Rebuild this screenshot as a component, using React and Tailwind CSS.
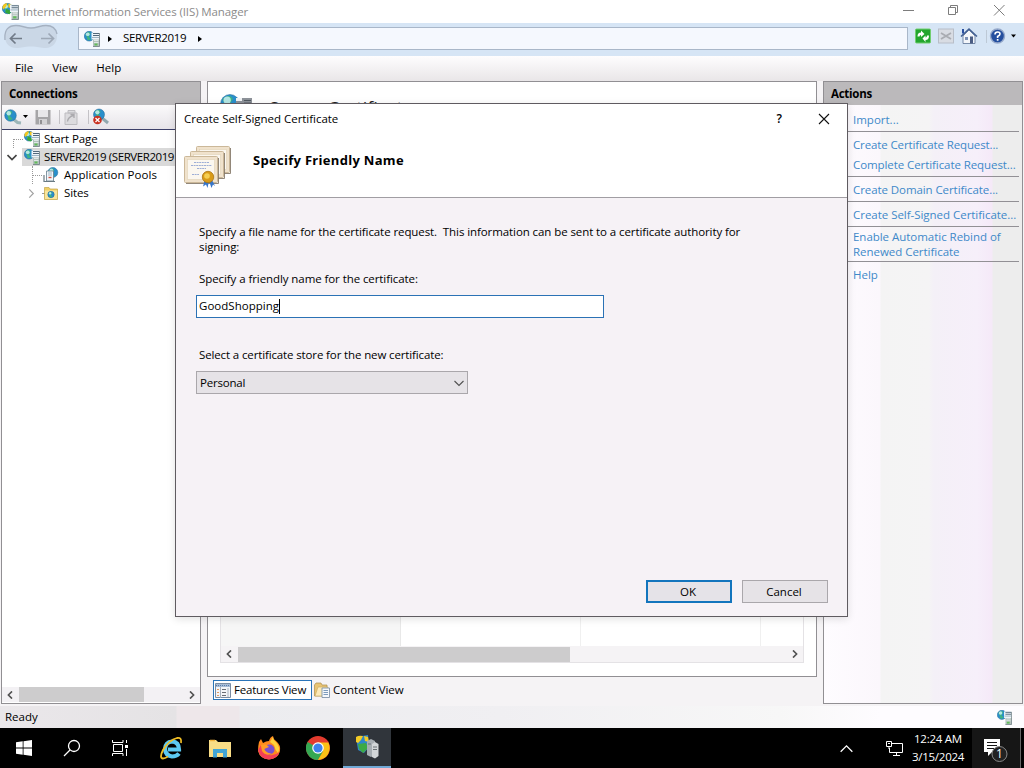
import React from "react";

const Globe = ({ r = 5, cx = 6, cy = 6 }) => (
  <g>
    <circle cx={cx} cy={cy} r={r} fill="#2a8fcb" />
    <path
      d={`M${cx - r * 0.8} ${cy - r * 0.5}Q${cx} ${cy - r * 1.2} ${cx + r * 0.3} ${cy - r * 0.5}L${cx - r * 0.1} ${cy + r * 0.1}L${cx + r * 0.4} ${cy + r * 0.6}L${cx - r * 0.3} ${cy + r * 0.9}L${cx - r * 0.5} ${cy + r * 0.1}Z`}
      fill="#3fb383"
    />
    <circle cx={cx - r * 0.3} cy={cy - r * 0.4} r={r * 0.38} fill="#c9f0f6" opacity=".85" />
    <circle cx={cx} cy={cy} r={r} fill="none" stroke="#1f6694" strokeWidth=".5" />
  </g>
);

const ServerIcon = ({ className = "w-4 h-4", warm }) => (
  <svg viewBox="0 0 16 16" className={`${className} shrink-0`}>
    <Globe cx={5.2} cy={5.2} r={4.9} />
    {warm && <path d="M.3 4.500Q1 .3 5 .3L4 3L1.500 6ZM6 .5L10 2L9 5.500L6 4Z" fill="#f4c81d" />}
    {warm && <path d="M4 5.500L9 7.500L7 10.500L3 9Z" fill="#36a63a" />}
    <rect x="7.500" y="1.500" width="8" height="7" fill="#eef4f8" />
    <path d="M9 2.500H15M9 4.500H15" stroke="#52687a" strokeWidth="1" />
    <path d="M8 6.500H15" stroke="#9fb4c2" strokeWidth="1" />
    <path d="M9 8.500H15.500V15.500H9Z" fill="#b4c1bd" />
    <path d="M15.500 2V15.500H9" fill="none" stroke="#6b7b80" strokeWidth=".8" />
    <path d="M10 9.500H14.500M10 11.500H14.500" stroke="#dfe8e6" />
    <rect x="10.500" y="12.500" width="3" height="2" fill="#62bd5a" />
  </svg>
);

const Chevron = ({ d, className = "w-2 h-2", color = "#505050", sw = 2 }) => (
  <svg viewBox="0 0 10 10" className={`${className} shrink-0`}>
    <path d={d} fill="none" stroke={color} strokeWidth={sw} />
  </svg>
);
const LEFT = "M7.500 .5L3 5L7.500 9.500";
const RIGHT = "M2.500 .5L7 5L2.500 9.500";

function TitleBar() {
  return (
    <div className="flex h-[23px] items-center bg-white pl-[2px]">
      <ServerIcon className="w-[17px] h-[17px]" warm />
      <span className="ml-[4px] text-[11.500px] tracking-[-0.1px] text-[#8b8b8b]">
        Internet Information Services (IIS) Manager
      </span>
      <div className="ml-auto flex items-center pb-[3px] pr-[19px]">
        <svg viewBox="0 0 104 12" className="h-3 w-[104px]" fill="none" stroke="#7d7d7d">
          <path d="M2 6.500H13M47.500 3.500H54.500V10.500H47.500ZM49.500 3V1.500H56.500V8.500H55M93 1L103.500 11.500M103.500 1L93 11.500" />
        </svg>
      </div>
    </div>
  );
}

function AddressBar() {
  return (
    <div className="flex h-[33px] items-start bg-[#d6e5f5] pl-[4px]">
      <svg viewBox="0 0 54 26" className="mt-[1px] h-[26px] w-[54px]" fill="none">
        <path
          d="M12 1.500C18 1.500 21 4 27 4S36 1.500 42 1.500C49 1.500 53 6 53 12.500S48 24 42 24C36 24 34 22.500 27 22.500S18 24 12 24C6 24 1 20 1 12.500S5 1.500 12 1.500Z"
          fill="#cad7e6"
        />
        <path d="M1 16C0 5 5 1.500 12 1.500C18 1.500 21 4 27 4S36 1.500 42 1.500C48 1.500 52 5 53 10" stroke="#a5b1c1" strokeWidth="1.300" />
        <path d="M18 14.500H7M11.500 9.500L6.500 14.500L11.500 19.500" stroke="#717b88" strokeWidth="1.700" />
        <path d="M37 14.500H49M44.500 9.500L49.500 14.500L44.500 19.500" stroke="#9da8b6" strokeWidth="1.700" />
      </svg>
      <div className="ml-[20px] mt-[4px] flex h-[23px] w-[830px] items-center border border-[#a9b7c9] bg-[#f5f8fe] pl-[5px]">
        <ServerIcon />
        <svg viewBox="0 0 4 6" className="ml-[8px] h-[6px] w-1"><path d="M0 0L4 3L0 6Z" /></svg>
        <span className="ml-[11px] w-[64px] whitespace-nowrap pb-[2px] text-[11.500px] tracking-[-0.33px] text-black">SERVER2019</span>
        <svg viewBox="0 0 4 6" className="ml-[11px] h-[6px] w-1"><path d="M0 0L4 3L0 6Z" /></svg>
      </div>
      <svg viewBox="0 0 104 20" className="ml-[6px] mt-[3px] h-5 w-[104px]">
        <rect x="1.500" y="3" width="15" height="14" rx="1" fill="#23a62e" stroke="#72ce70" />
        <path d="M3.500 10.500Q3.500 6.500 7 6.500V4.500L10.500 8L7 11V9Q5.500 9 5.500 10.500ZM15 9.500Q15 14 11.500 14V16L8.500 12.500L11.500 9.500V11.500Q13 11.500 13 9.500Z" fill="#fff" />
        <rect x="24.500" y="3" width="15" height="14" fill="#d8dce3" stroke="#b8bec8" />
        <path d="M27 7L37 13M37 7L27 13" stroke="#a9acb2" strokeWidth="1.800" />
        <path d="M49 10V17.500H61V10L55 4Z" fill="#f3f6fa" stroke="#5c7294" strokeWidth=".8" />
        <path d="M47 10.500L55 3L63 10.500" fill="none" stroke="#405e92" strokeWidth="1.500" />
        <path d="M49 3V7.500" stroke="#2a50a0" strokeWidth="2" />
        <rect x="51" y="11" width="3" height="3" fill="#7c92b6" /><rect x="56" y="10.500" width="3" height="7" fill="#4b5d83" />
        <path d="M72.500 4V17" stroke="#bdc9d6" />
        <circle cx="83.500" cy="10" r="7" fill="#244f9f" stroke="#95a8ca" strokeWidth="1.400" />
        <path d="M81 8.500Q81 6 83.700 6Q86 6 86 8Q86 9.300 83.600 10.500V12" fill="none" stroke="#fff" strokeWidth="1.600" />
        <rect x="82.800" y="13" width="1.700" height="1.700" fill="#fff" />
        <path d="M97 8.500H102L99.500 11.500Z" />
      </svg>
    </div>
  );
}

function PanelHeader({ children }) {
  return (
    <div className="flex h-[23px] shrink-0 items-center bg-[#bbb9bb] pl-[7px] text-[11.500px] font-bold tracking-[-0.25px] text-black">
      {children}
    </div>
  );
}

function ConnToolbar() {
  return (
    <div className="h-[25px] shrink-0 border-b border-[#3c3f69] bg-gradient-to-b from-[#fbfafb] to-[#e7e4e9] pl-[2px]">
      <svg viewBox="0 0 108 24" className="h-6 w-[108px]">
        <path d="M8 13L13.500 17.500L17 18" stroke="#9cb5b8" strokeWidth="3" fill="none" />
        <Globe cx={6.500} cy={10.500} r={5.800} />
        <path d="M19 10H24L21.500 13Z" />
        <path d="M31.500 5H46.500V19.500H31.500Z" fill="#a6a5a7" />
        <rect x="34" y="5" width="10" height="7" fill="#e8e7e9" /><rect x="35" y="14" width="8" height="5.500" fill="#d3d2d4" /><rect x="36" y="15" width="2" height="4" fill="#929193" />
        <path d="M55.500 5V19M84.500 5V19" stroke="#c4c2c6" />
        <path d="M61 8H73V19.500H61ZM64 5.500H71V8H64Z" fill="#dcdbde" stroke="#bdbcc0" />
        <path d="M63.500 16.500Q64 12 69.500 10.500M66.500 9.500H70V13" stroke="#aaa9ad" fill="none" strokeWidth="1.300" />
        <path d="M98 13L104 18" stroke="#91a8af" strokeWidth="3" />
        <Globe cx={95} cy={9.500} r={5.500} />
        <circle cx="93.500" cy="15" r="4.300" fill="#c93020" /><path d="M91.500 13L95.500 17M95.500 13L91.500 17" stroke="#fff" strokeWidth="1.300" />
      </svg>
    </div>
  );
}

const rowText = "whitespace-nowrap text-[11.500px] text-black";

function Connections() {
  return (
    <section className="ml-[1px] flex w-[200px] flex-col border border-[#918f93] bg-white">
      <PanelHeader>Connections</PanelHeader>
      <ConnToolbar />
      <div className="flex-1 overflow-hidden">
        <div className="flex h-[18px] items-center pl-[11px]">
          <div className="mt-[9px] h-[9px] w-[10px] border-l border-t border-dotted border-[#999]" />
          <ServerIcon className="ml-[1px] h-4 w-4" warm />
          <span className={`${rowText} ml-[4px] tracking-[-0.1px]`}>Start Page</span>
        </div>
        <div className="flex h-[18px] items-center pl-[5px]">
          <Chevron d="M.5 3L5 7.500L9.500 3" className="h-[10px] w-[10px]" color="#454545" sw={1.700} />
          <div className="ml-[5px] flex h-[18px] flex-1 items-center bg-[#d9d9d9] pl-[2px]">
            <ServerIcon />
            <span className={`${rowText} ml-[4px] tracking-[-0.42px]`}>SERVER2019 (SERVER2019</span>
          </div>
        </div>
        <div className="flex h-[18px] items-start pl-[30px]">
          <div className="h-[18px] w-[1px] border-l border-dotted border-[#999]" />
          <div className="mt-[9px] w-[9px] border-t border-dotted border-[#999]" />
          <svg viewBox="0 0 17 16" className="mt-[1px] h-4 w-[17px] shrink-0">
            <Globe cx={10.800} cy={5.500} r={5} />
            <path d="M4.500 4H11.500V14H4.500Z" fill="#f2f6f9" stroke="#667d8c" strokeWidth=".8" />
            <path d="M6 6H10M6 8H10" stroke="#8aa7ba" strokeWidth=".8" />
            <path d="M2 8V14.500H13" fill="none" stroke="#6b7b83" strokeWidth="1.200" /><path d="M6.500 10.500H9.500" stroke="#d34e3d" strokeWidth="1.400" />
          </svg>
          <span className={`${rowText} ml-[5px] leading-[18px] tracking-[0.05px]`}>Application Pools</span>
        </div>
        <div className="flex h-[18px] items-center pl-[25px]">
          <Chevron d={RIGHT} className="h-[9px] w-[9px]" color="#a2a2a2" sw={1.300} />
          <div className="ml-[6px] w-[2px] border-t border-dotted border-[#999]" />
          <svg viewBox="0 0 14 14" className="h-[14px] w-[14px]">
            <path d="M.5 1.500H5L6 3H13.500V13.500H.5Z" fill="#efcf65" stroke="#c4a548" strokeWidth=".7" />
            <rect x="1" y="4.500" width="12" height="8.500" fill="#f9e59c" /><Globe cx={7} cy={8.500} r={3.200} />
          </svg>
          <span className={`${rowText} ml-[6px] tracking-[-0.1px]`}>Sites</span>
        </div>
      </div>
      <div className="mb-[1px] flex h-[15px] items-center bg-[#f3f1f4] pl-[4px] pr-[4px]">
        <Chevron d={LEFT} />
        <div className="ml-[5px] h-[15px] w-[125px] bg-[#cdcccd]" />
        <div className="ml-auto"><Chevron d={RIGHT} /></div>
      </div>
    </section>
  );
}

function Center() {
  return (
    <section className="ml-[6px] flex w-[610px] flex-col">
      <div className="flex h-[596px] flex-col border border-[#918f93] bg-white">
        <div className="flex h-[45px] items-start pl-[12px] pt-[12px]">
          <svg viewBox="0 0 32 32" className="h-8 w-8"><Globe cx={10} cy={10} r={9.500} /><path d="M16 4H32V17H16Z" fill="#8d9299" /><path d="M16 4H22V7H16Z" fill="#f1f3f5" /><path d="M24 6.500H31M24 9H31" stroke="#505860" /></svg>
          <h1 className="ml-[17px] text-[18px] leading-[28px] tracking-[0px] text-[#222]">Server Certificates</h1>
        </div>
        <div className="mx-[12px] mb-[13px] flex flex-1 flex-col border border-[#e4e2e5]">
          <div className="flex flex-1">
            <div className="w-[180px] border-r border-[#e8e8e8] bg-[#f6f6f6]" />
            <div className="w-[180px] border-r border-[#f0f0f0]" />
            <div className="w-[180px] border-r border-[#f0f0f0]" />
          </div>
          <div className="flex h-[16px] items-center bg-[#f5f3f5] px-[4px]">
            <Chevron d={LEFT} />
            <div className="ml-[5px] h-[15px] w-[332px] bg-[#cdcccd]" />
            <div className="ml-auto"><Chevron d={RIGHT} /></div>
          </div>
        </div>
      </div>
      <div className="flex items-center pl-[6px] pt-[3px] text-[11.500px] text-black">
        <div className="flex h-[20px] w-[99px] items-center border border-[#2a74b8] bg-white pl-[1px]">
          <svg viewBox="0 0 16 15" className="h-[15px] w-4 shrink-0">
            <path d="M.5 .5H15.500V14.500H.5Z" fill="#f3f5f8" stroke="#7a8da3" /><path d="M1 1H15V4H1Z" fill="#a7bcd6" /><path d="M1 2.500H15" stroke="#5a7da8" strokeDasharray="1 1" />
            <path d="M2 6.500H4M2 9.500H4M2 12.500H4" stroke="#e29a62" /><path d="M5.500 4V15M13 5V14" stroke="#a8b2be" /><path d="M7 6.500H11M7 9.500H11M7 12.500H11" stroke="#686c74" />
          </svg>
          <span className="ml-[3px] whitespace-nowrap tracking-[-0.2px]">Features View</span>
        </div>
        <svg viewBox="0 0 16 16" className="ml-[2px] h-4 w-4">
          <path d="M.5 14V3L2 1H7L8 3H13V14Z" fill="#e8c474" stroke="#ad8d4a" strokeWidth=".7" /><path d="M1 14L4 5H14L11 14Z" fill="#fbe9b8" stroke="#c8a75e" strokeWidth=".6" />
          <path d="M8 6H15.500V15.500H8Z" fill="#f6f8fb" stroke="#7488a0" strokeWidth=".8" /><path d="M9.500 8.500H14M9.500 10.500H14M9.500 12.500H14" stroke="#5f83ac" strokeWidth=".8" />
        </svg>
        <span className="ml-[3px] tracking-[-0.03px]">Content View</span>
      </div>
    </section>
  );
}

const actionGroups = [
  [["Import...", "h-[26px] whitespace-nowrap pt-[7px]"]],
  [
    ["Create Certificate Request...", "h-[22px] whitespace-nowrap pt-[5px] tracking-[-0.12px]"],
    ["Complete Certificate Request...", "h-[22px] whitespace-nowrap pt-[3px] tracking-[-0.08px]"],
  ],
  [["Create Domain Certificate...", "h-[24px] whitespace-nowrap pt-[5px] tracking-[-0.08px]"]],
  [["Create Self-Signed Certificate...", "h-[24px] whitespace-nowrap pt-[5px] tracking-[-0.03px]"]],
  [["Enable Automatic Rebind of Renewed Certificate", "h-[34px] w-[160px] pt-[2px] tracking-[-0.03px]"]],
  [["Help", "h-[24px] pt-[5px]"]],
];

function Actions() {
  return (
    <section className="ml-[6px] flex w-[200px] flex-col border border-[#918f93] bg-[linear-gradient(90deg,#fefcff_0,#fbf7fc_56px,#f4f4f4_57px,#f5f4f5_105px,#f4f0f7_110px,#f6effa_153px,#f5e9f8_168px,#ededed_169px)]">
      <PanelHeader>Actions</PanelHeader>
      <div className="pl-[24px] pr-[3px] text-[11.500px] leading-[15px] text-[#4089c9]">
        {actionGroups.map((g, i) => (
          <div key={i} className={i < actionGroups.length - 1 ? "border-b border-[#929095] pl-[5px]" : "pl-[5px]"}>
            {g.map(([t, c]) => <div key={t} className={c}>{t}</div>)}
          </div>
        ))}
      </div>
    </section>
  );
}

const CertPage = ({ x, y }) => (
  <g>
    <rect x={x + 0.5} y={y + 0.5} width="33" height="26" rx="1" fill="#f0e2cc" stroke="#cbb899" />
    <rect x={x + 3.5} y={y + 3.5} width="27" height="20" fill="#fbf7ef" stroke="#e2d2b6" strokeWidth=".6" />
    <path d={`M${x + 34.5} ${y + 2}V${y + 27.5}H${x + 2}`} fill="none" stroke="#86796a" strokeWidth=".9" />
  </g>
);

function CertIcon() {
  return (
    <svg viewBox="0 0 49 43" className="h-[43px] w-[49px]">
      <CertPage x={12} y={0} /><CertPage x={6} y={5} /><CertPage x={0} y={10} />
      <path d="M10 16.500H25M7 19.500H28M13 22.500H22M8 28.500H15" stroke="#9daed6" strokeDasharray="2 .6" />
      <path d="M21 33L19 40.500L22 38.500L23.500 42L25 35L27.500 42L29 38.500L31 40L27 32" fill="#3775c8" />
      <circle cx="24" cy="31" r="5.700" fill="#d99b18" stroke="#a97310" strokeWidth=".8" /><circle cx="23" cy="30" r="2.800" fill="#f6cf51" />
    </svg>
  );
}

function Dialog() {
  return (
    <div className="absolute left-[175px] top-[103px] flex h-[514px] w-[673px] flex-col border border-[#5f5b60] bg-[#f6f2f6] text-[11.500px] text-black shadow-[0_2px_8px_rgba(0,0,0,0.12)]">
      <div className="h-[94px] border-b border-[#a19ea3] bg-white">
        <div className="flex h-[29px] items-center pl-[8px] pr-[17px]">
          <span className="tracking-[-0.03px]">Create Self-Signed Certificate</span>
          <span className="ml-auto text-[12px] font-semibold">?</span>
          <svg viewBox="0 0 12 12" className="ml-[36px] h-3 w-3"><path d="M1 1L11 11M11 1L1 11" stroke="#111" strokeWidth="1.100" /></svg>
        </div>
        <div className="flex items-start pl-[8px] pt-[13px]">
          <CertIcon />
          <h2 className="ml-[20px] mt-[4px] text-[13px] font-bold leading-[20px] tracking-[0.3px]">Specify Friendly Name</h2>
        </div>
      </div>
      <div className="flex flex-1 flex-col items-start pl-[20px] pt-[26px]">
        <p className="whitespace-pre pl-[3px] leading-[15px] tracking-[-0.085px]">{"Specify a file name for the certificate request.  This information can be sent to a certificate authority for\nsigning:"}</p>
        <label className="mt-[17px] pl-[3px] leading-[15px] tracking-[-0.08px]">Specify a friendly name for the certificate:</label>
        <div className="mt-[9px] flex h-[23px] w-[408px] items-center border border-[#2b72b5] bg-white pb-[1px] pl-[2px]">
          <span className="tracking-[0.03px]">GoodShopping</span>
          <div className="h-[15px] w-px bg-black" />
        </div>
        <label className="mt-[29px] pl-[3px] leading-[15px] tracking-[-0.13px]">Select a certificate store for the new certificate:</label>
        <div className="mt-[9px] flex h-[23px] w-[272px] items-center border border-[#aaa7ab] bg-[#e6e3e7] pl-[3px] pr-[3px]">
          <span className="tracking-[-0.2px]">Personal</span>
          <div className="ml-auto"><Chevron d="M.5 3L5 7.500L9.500 3" className="h-[10px] w-[10px]" sw={1.100} /></div>
        </div>
        <div className="mt-auto mb-[13px] ml-[450px] flex gap-[10px]">
          <div className="flex h-[23px] w-[86px] items-center justify-center border-2 border-[#1375bd] bg-[#e5e3e8] pr-[2px]">OK</div>
          <div className="flex h-[23px] w-[86px] items-center justify-center border border-[#aaa7ab] bg-[#e6e3e7] pr-[2px]">Cancel</div>
        </div>
      </div>
    </div>
  );
}

function Taskbar() {
  return (
    <div className="flex h-[40px] items-center bg-black text-white">
      <div className="flex w-12 justify-center">
        <svg viewBox="0 0 16 16" className="h-4 w-4" fill="#fff"><path d="M0 2.200L6.700 1.300V7.600H0ZM7.500 1.200L16 0V7.600H7.500ZM0 8.400H6.700V14.700L0 13.800ZM7.500 8.400H16V16L7.500 14.800Z" /></svg>
      </div>
      <div className="flex w-12 justify-center">
        <svg viewBox="0 0 18 18" className="h-[18px] w-[18px]" fill="none" stroke="#fff" strokeWidth="1.300"><circle cx="11" cy="7" r="5.500" /><path d="M7 11L1 17" /></svg>
      </div>
      <div className="flex w-12 justify-center">
        <svg viewBox="0 0 17 16" className="h-4 w-[17px]" fill="none" stroke="#fff"><path d="M1.500 4.500H10.500V11.500H1.500ZM.5 0V2.500M11 0V2.500M.5 2.500H11M.5 16V13.500M11 16V13.500M.5 13.500H11M14.500 0V3M14.500 9V16" /><rect x="13" y="5" width="3" height="3" fill="#fff" stroke="none" /></svg>
      </div>
      <div className="flex w-[54px] justify-center">
        <svg viewBox="0 0 24 24" className="h-6 w-6" fill="none"><path d="M20 17.500Q17.500 20.500 13 20.500Q6.500 19.500 6 13Q6.500 6 13 5.500Q20 6 20 13.500H9" stroke="#5cc9f2" strokeWidth="4.200" /><path d="M22 7Q23 1 18 2Q10 4 4 14Q0 22 4 22.500Q6 22.500 9 20.500" stroke="#f0bd25" strokeWidth="1.800" /></svg>
      </div>
      <div className="flex w-[44px] justify-center">
        <svg viewBox="0 0 22 19" className="h-[19px] w-[22px]"><path d="M0 1H7L9 3H22V18H0Z" fill="#f9dd86" /><path d="M1 1.500H6" stroke="#f5b43e" strokeWidth="1.500" /><path d="M4 10H18V18.500H14V14H8V18.500H4Z" fill="#41a5d6" /></svg>
      </div>
      <div className="flex w-[53px] justify-center">
        <svg viewBox="0 0 24 24" className="h-6 w-6"><path d="M2 6L4 3L6 7Q9 5 12 5Q13 1 16 0Q16 3 19 5Q24 9 23 15Q21 23 12 23.500Q3 23 1 15Q1 10 2 6Z" fill="#ff8a1d" /><path d="M16 1Q16 4 19 6Q24 12 21 17Q18 14 17 9L13 6Z" fill="#ffd33c" /><path d="M1 14Q3 23 12 23.500Q20 23 22.500 16Q18 20 12 19Q5 18 4 9Z" fill="#f33e55" /><circle cx="12.500" cy="13.500" r="5" fill="#7950cf" /><path d="M4 9Q9 7 12 11L7 13Q10 18 15 17Q9 21 5 15Z" fill="#ff9d24" /></svg>
      </div>
      <div className="flex w-[46px] justify-center">
        <svg viewBox="0 0 24 24" className="h-6 w-6"><circle cx="12" cy="12" r="12" fill="#e33b2e" /><path d="M12 12L1.600 6A12 12 0 0 0 12 24L17.200 15Z" fill="#34a853" /><path d="M12 24A12 12 0 0 0 22.400 6.600H12L17.200 15Z" fill="#fbc116" /><circle cx="12" cy="12" r="5.800" fill="#fff" /><circle cx="12" cy="12" r="4.600" fill="#3d82ed" /></svg>
      </div>
      <div className="ml-[2px] flex h-[40px] w-12 items-center justify-center border-b-2 border-[#71a9d6] bg-[#30353b]">
        <svg viewBox="0 0 24 24" className="h-6 w-6"><path d="M1 2L13 0L14 12L9 18L3 15Z" fill="#2f87ca" /><path d="M1 2Q4 0 8 1L6 5L3 8L1 7ZM9 1L13 2L14 7L10 6Z" fill="#f4cb25" /><path d="M3 9L11 8L13 13L8 18L4 14Z" fill="#3daa45" /><path d="M12 6L16 4L20 6V20L16 22L12 20Z" fill="#a7aeb3" /><path d="M17 9L20 7L23.500 9V21L20 23.500L17 22Z" fill="#d2d6d8" /><path d="M13 9H16M18 12H22M18 14.500H22" stroke="#6a7276" /></svg>
      </div>
      <div className="ml-auto flex items-center">
        <Chevron d="M.5 7.500L5 3L9.500 7.500" className="h-[13px] w-[13px]" color="#fff" sw={1} />
        <svg viewBox="0 0 17 15" className="ml-[33px] h-[15px] w-[17px]" fill="none" stroke="#fff"><path d="M6 2.500H16.500V11.500H3.500V7M10.500 12V14.500M7 14.500H14M.5 .5H5.500V5.500H.5ZM3 5.500V8M2 2.500H4" /></svg>
        <div className="ml-[4px] w-[62px] whitespace-nowrap text-center text-[11.500px] leading-[18px] tracking-[-0.25px]"><div>12:24 AM</div><div>3/15/2024</div></div>
        <div className="ml-[3px] flex h-[40px] w-[48px] items-center bg-[#161616] pl-[12px]">
          <svg viewBox="0 0 26 26" className="mt-[6px] h-[26px] w-[26px]"><path d="M0 1H16V14H8L4 18V14H0Z" fill="#fff" /><path d="M3 4.500H13M3 7.500H13M3 10.500H10" stroke="#161616" strokeWidth="1.200" /><circle cx="15.500" cy="16" r="7.500" fill="#222" stroke="#888" /><text x="15.500" y="20.300" textAnchor="middle" fontSize="12" fill="#fff" fontFamily="Open Sans, sans-serif">1</text></svg>
        </div>
        <div className="h-[40px] w-px bg-[#666]" /><div className="w-[3px]" />
      </div>
    </div>
  );
}

export default function App() {
  return (
    <div className="relative flex h-[768px] w-[1024px] flex-col overflow-hidden bg-[#f5f3f5] font-['Open_Sans','Noto_Sans',sans-serif]">
      <TitleBar />
      <AddressBar />
      <div className="flex h-[25px] items-center gap-[19px] bg-gradient-to-b from-[#fefdfe] to-[#e9e6e8] pb-[2px] pl-[15px] text-[11.500px] text-black">
        <span>File</span><span>View</span><span>Help</span>
      </div>
      <main className="flex h-[623px]">
        <Connections />
        <Center />
        <Actions />
      </main>
      <div className="mt-[2px] flex h-[22px] items-center bg-[linear-gradient(90deg,#eae7ea_0,#e5e3e5_176px,#eee7ea_177px,#eee7ea_239px,#ececef_240px,#f0eff2_500px,#f7f7f7_780px,#fefcff_880px)] pl-[5px] pr-[12px] text-[11.500px] text-black">
        <span>Ready</span>
        <div className="ml-auto"><ServerIcon className="h-[15px] w-[15px]" /></div>
      </div>
      <Taskbar />
      <Dialog />
    </div>
  );
}
